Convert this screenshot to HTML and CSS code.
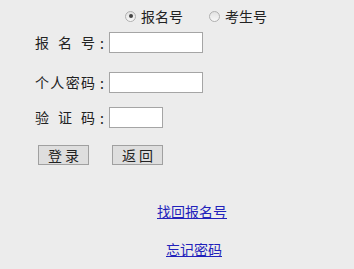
FILE: index.html
```html
<!DOCTYPE html>
<html>
<head>
<meta charset="utf-8">
<link rel="stylesheet" href="styles.css">
</head>
<body>
<div class="page">
  <div class="radios">
    <label class="opt"><span class="radio checked"></span>报名号</label>
    <label class="opt"><span class="radio"></span>考生号</label>
  </div>
  <div class="form">
    <div class="row r1">
      <span class="lbl">报名号</span><span class="colon">:</span><span class="input wide"></span>
    </div>
    <div class="row r2">
      <span class="lbl">个人密码</span><span class="colon">:</span><span class="input wide"></span>
    </div>
    <div class="row r3">
      <span class="lbl">验证码</span><span class="colon">:</span><span class="input short"></span>
    </div>
    <div class="buttons">
      <span class="btn">登 录</span>
      <span class="btn">返 回</span>
    </div>
  </div>
  <div class="links">
    <a class="link l1" href="#">找回报名号</a>
    <a class="link l2" href="#">忘记密码</a>
  </div>
</div>
</body>
</html>
```
FILE: styles.css
```css
html, body {
  margin: 0;
  padding: 0;
  background: #ececec;
}
.page {
  width: 354px;
  height: 269px;
  font-family: "Noto Sans CJK SC", "Microsoft YaHei", sans-serif;
  font-size: 14px;
  color: #222;
  overflow: hidden;
}
.radios {
  display: flex;
  align-items: center;
  height: 20px;
  padding: 6px 0 0 125px;
  gap: 26px;
}
.opt {
  display: flex;
  align-items: center;
  line-height: 20px;
}
.radio {
  width: 11px;
  height: 11px;
  border-radius: 50%;
  border: 1px solid #b0b0b0;
  background: linear-gradient(#e2e2e2, #f8f8f8);
  margin-right: 5px;
  position: relative;
  box-sizing: border-box;
}
.radio.checked::after {
  content: "";
  position: absolute;
  left: 2.5px;
  top: 2.5px;
  width: 4px;
  height: 4px;
  border-radius: 50%;
  background: #444;
}
.form {
  padding-left: 35px;
}
.row {
  display: flex;
  align-items: center;
  height: 21px;
}
.r1 { margin-top: 6px; }
.r2 { margin-top: 19px; }
.r3 { margin-top: 14px; }
.lbl {
  width: 60px;
  text-align: justify;
  text-align-last: justify;
  line-height: 21px;
}
.colon {
  width: 14px;
  text-align: center;
}
.input {
  height: 21px;
  box-sizing: border-box;
  border: 1px solid #a5a5a5;
  background: #fff;
}
.wide { width: 94px; }
.short { width: 54px; }
.buttons {
  display: flex;
  gap: 23px;
  margin-top: 17px;
  padding-left: 3px;
}
.btn {
  width: 51px;
  height: 20px;
  box-sizing: border-box;
  border: 1px solid #a0a0a0;
  background: #dedede;
  text-align: center;
  line-height: 18px;
  font-size: 14px;
  color: #222;
}
.links {
  display: flex;
  flex-direction: column;
  align-items: center;
  width: 384px;
  margin-top: 36px;
}
.link {
  color: #2222bb;
  text-decoration: underline;
  line-height: 20px;
}
.l2 {
  margin-top: 18px;
  padding-left: 4px;
}
```
